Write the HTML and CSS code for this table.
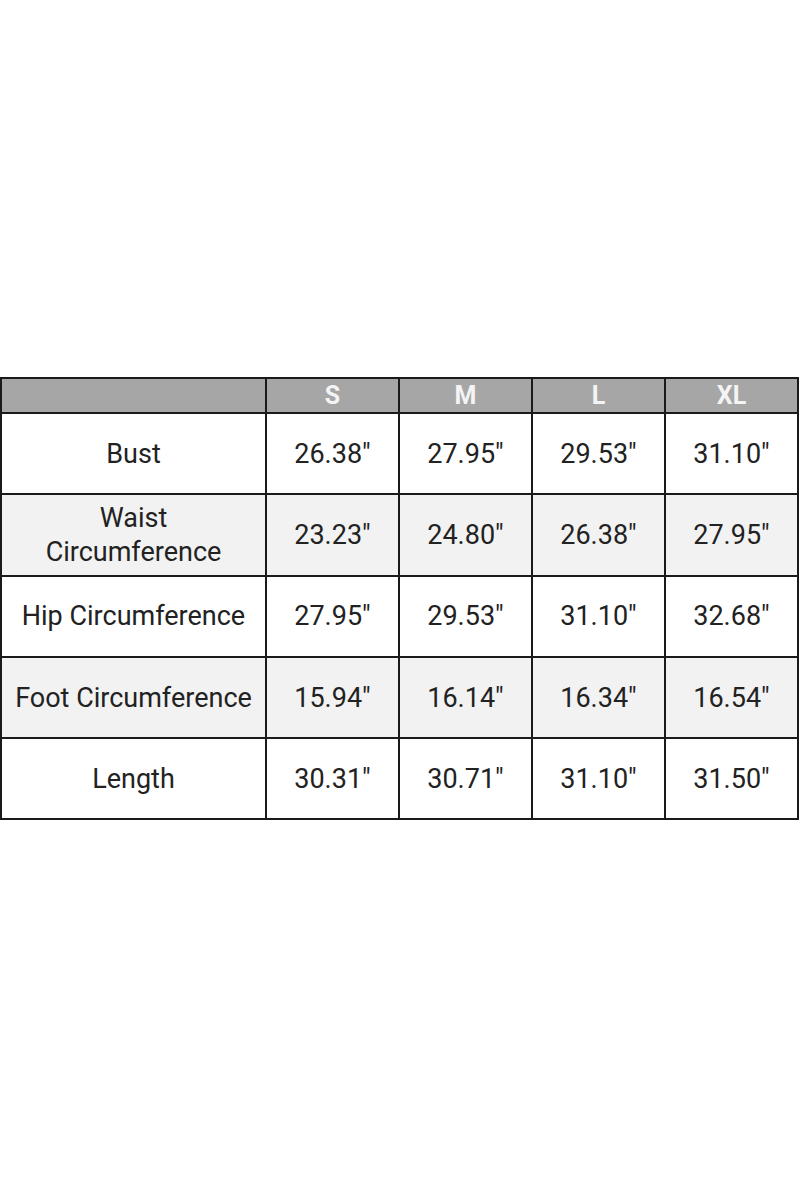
FILE: index.html
```html
<!DOCTYPE html>
<html>
<head>
<meta charset="utf-8">
<link rel="stylesheet" href="styles.css">
</head>
<body>
<div class="page">
<table class="chart">
  <colgroup><col class="c0"><col class="c"><col class="c"><col class="c"><col class="c"></colgroup>
  <thead>
    <tr><th></th><th>S</th><th>M</th><th>L</th><th>XL</th></tr>
  </thead>
  <tbody>
    <tr><td>Bust</td><td>26.38"</td><td>27.95"</td><td>29.53"</td><td>31.10"</td></tr>
    <tr class="alt"><td>Waist<br>Circumference</td><td>23.23"</td><td>24.80"</td><td>26.38"</td><td>27.95"</td></tr>
    <tr><td>Hip Circumference</td><td>27.95"</td><td>29.53"</td><td>31.10"</td><td>32.68"</td></tr>
    <tr class="alt"><td>Foot Circumference</td><td>15.94"</td><td>16.14"</td><td>16.34"</td><td>16.54"</td></tr>
    <tr><td>Length</td><td>30.31"</td><td>30.71"</td><td>31.10"</td><td>31.50"</td></tr>
  </tbody>
</table>
</div>
</body>
</html>
```
FILE: styles.css
```css
html, body { margin: 0; padding: 0; background: #fff; }
.page { padding-top: 377px; }
.chart {
  border-collapse: collapse;
  width: 798px;
  table-layout: fixed;
  font-family: "Roboto", "Liberation Sans", sans-serif;
  color: #222;
}
.c0 { width: 265px; }
.c { width: 133px; }
.chart th, .chart td {
  border: 2px solid #1a1a1a;
  text-align: center;
  vertical-align: middle;
  padding: 0;
}
.chart th {
  background: #a6a6a6;
  color: #f4f4f4;
  font-weight: 700;
  font-size: 25px;
  height: 33px;
  line-height: 28px;
}
.chart td {
  height: 79.3px;
  font-size: 27px;
  line-height: 34px;
  background: #fff;
}
.chart tr.alt td { background: #f2f2f2; }
```
